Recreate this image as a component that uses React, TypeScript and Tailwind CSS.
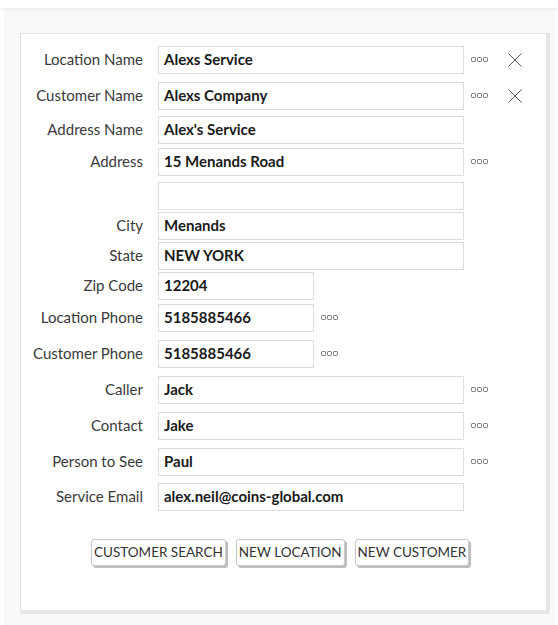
import React from "react";

const Dots = () => (
  <svg width="18" height="6" viewBox="0 0 18 6" className="block">
    <rect x="0.5" y="0.5" width="4" height="4" rx="0.8" fill="none" stroke="#777" strokeWidth="1" />
    <rect x="6.5" y="0.5" width="4" height="4" rx="0.8" fill="none" stroke="#777" strokeWidth="1" />
    <rect x="12.5" y="0.5" width="4" height="4" rx="0.8" fill="none" stroke="#777" strokeWidth="1" />
  </svg>
);

const Cross = () => (
  <svg width="14" height="14" viewBox="0 0 14 14" className="block">
    <path d="M0.5 0.5 L13.5 13.5 M13.5 0.5 L0.5 13.5" stroke="#555" strokeWidth="1" fill="none" />
  </svg>
);

type Row = {
  label: string;
  value: string;
  mt: string;
  short?: boolean;
  dots?: boolean;
  cross?: boolean;
};

const rows: Row[] = [
  { label: "Location Name", value: "Alexs Service", mt: "mt-0", dots: true, cross: true },
  { label: "Customer Name", value: "Alexs Company", mt: "mt-[8px]", dots: true, cross: true },
  { label: "Address Name", value: "Alex's Service", mt: "mt-[6px]" },
  { label: "Address", value: "15 Menands Road", mt: "mt-[4px]", dots: true },
  { label: "", value: "", mt: "mt-[6px]" },
  { label: "City", value: "Menands", mt: "mt-[2px]" },
  { label: "State", value: "NEW YORK", mt: "mt-[2px]" },
  { label: "Zip Code", value: "12204", mt: "mt-[2px]", short: true },
  { label: "Location Phone", value: "5185885466", mt: "mt-[4px]", short: true, dots: true },
  { label: "Customer Phone", value: "5185885466", mt: "mt-[8px]", short: true, dots: true },
  { label: "Caller", value: "Jack", mt: "mt-[8px]", dots: true },
  { label: "Contact", value: "Jake", mt: "mt-[8px]", dots: true },
  { label: "Person to See", value: "Paul", mt: "mt-[8px]", dots: true },
  { label: "Service Email", value: "alex.neil@coins-global.com", mt: "mt-[7px]" },
];

const btn =
  "h-[27px] px-[2px] bg-white border border-[#c8c8c8] rounded-[3px] shadow-[2px_2px_0_#bdbdbd] text-[13.5px] text-[#333] uppercase leading-none";

export default function App() {
  return (
    <div
      className="w-[558px] h-[625px] bg-white flex flex-col overflow-hidden"
      style={{ fontFamily: "Lato, 'Open Sans', sans-serif" }}
    >
      <div className="h-[8px] bg-white shadow-[0_2px_4px_rgba(0,0,0,0.06)] relative z-10" />
      <div className="flex-1 ml-[4px] mr-[2px] bg-[#f9f9f9] pt-[25px] pl-[16px]">
        <div className="w-[530px] h-[581px] bg-white border border-[#e2e2e2] border-r-[4px] border-b-[4px] border-r-[#e6e6e6] border-b-[#e6e6e6] pt-[12px]">
          <div className="flex flex-col">
            {rows.map((r, i) => (
              <div key={i} className={`flex items-center h-[28px] ${r.mt}`}>
                <div className="w-[122px] text-right text-[15px] text-[#3a3a3a] leading-none -mt-[1px]">
                  {r.label}
                </div>
                <div
                  className={`ml-[15px] h-[28px] border border-[#dcdcdc] flex items-center pl-[5px] text-[15px] font-bold text-[#1a1a1a] leading-none ${
                    r.short ? "w-[156px]" : "w-[306px]"
                  }`}
                >
                  <span className="-mt-[1px]">{r.value}</span>
                </div>
                {r.dots && (
                  <div className="ml-[7px] w-[18px] flex items-center">
                    <Dots />
                  </div>
                )}
                {r.cross && (
                  <div className="ml-[19px] flex items-center">
                    <Cross />
                  </div>
                )}
              </div>
            ))}
          </div>
          <div className="flex mt-[28px] pl-[70px] gap-[10px]">
            <button className={btn}>CUSTOMER SEARCH</button>
            <button className={btn}>NEW LOCATION</button>
            <button className={btn}>NEW CUSTOMER</button>
          </div>
        </div>
      </div>
    </div>
  );
}
